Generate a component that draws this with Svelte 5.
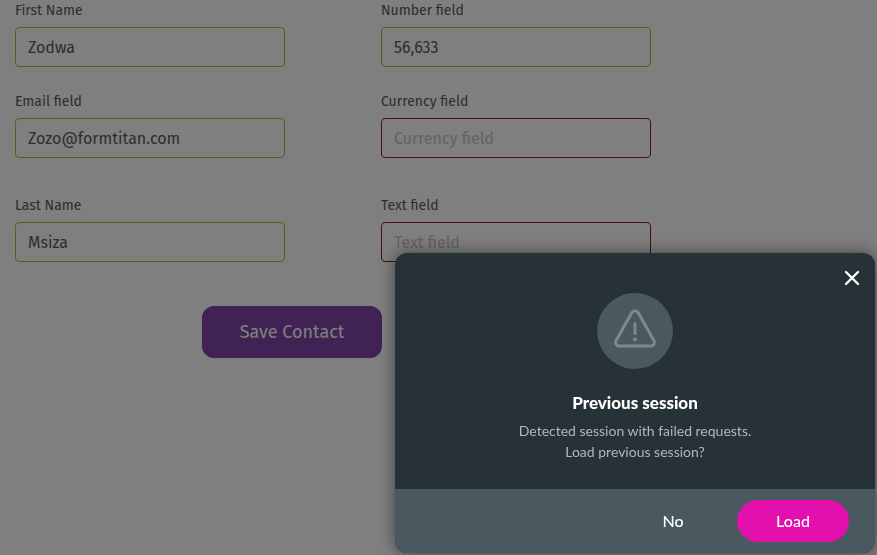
<script>
	let open = true;

	let fields = [
		{ id: 'first-name', label: 'First Name', value: 'Zodwa', valid: true },
		{ id: 'number', label: 'Number field', value: '56,633', valid: true },
		{ id: 'email', label: 'Email field', value: 'Zozo@formtitan.com', valid: true },
		{ id: 'currency', label: 'Currency field', value: '', valid: false },
		{ id: 'last-name', label: 'Last Name', value: 'Msiza', valid: true },
		{ id: 'text', label: 'Text field', value: '', valid: false }
	];

	const close = () => {
		open = false;
	};
</script>

<form class="contact-form" on:submit|preventDefault>
	<div class="fields">
		{#each fields as field (field.id)}
			<div class="field">
				<label for={field.id}>{field.label}</label>
				<input
					id={field.id}
					type="text"
					class:invalid={!field.valid}
					placeholder={field.label}
					bind:value={field.value}
				/>
			</div>
		{/each}
	</div>
	<button type="submit" class="save">Save Contact</button>
</form>

{#if open}
	<div class="backdrop"></div>
	<div class="modal" role="dialog" aria-modal="true" aria-labelledby="modal-title">
		<div class="modal-body">
			<button type="button" class="close" aria-label="Close" on:click={close}>
				<svg width="16" height="16" viewBox="0 0 16 16">
					<path d="M2 2l12 12M14 2L2 14" stroke="#fff" stroke-width="2.4" stroke-linecap="round" />
				</svg>
			</button>
			<div class="icon">
				<svg width="44" height="40" viewBox="0 0 44 40" fill="none" stroke="#7f898b" stroke-width="3">
					<path
						d="M18.9 3.4a3.6 3.6 0 0 1 6.2 0l15.8 28.2a3.6 3.6 0 0 1-3.1 5.4H6.2a3.6 3.6 0 0 1-3.1-5.4z"
						stroke-linejoin="round"
					/>
					<path d="M22 14.5v10" stroke-linecap="round" />
					<circle cx="22" cy="30.4" r="2" fill="#7f898b" stroke="none" />
				</svg>
			</div>
			<h2 id="modal-title">Previous session</h2>
			<p>Detected session with failed requests.<br />Load previous session?</p>
		</div>
		<div class="modal-footer">
			<button type="button" on:click={close}>No</button>
			<button type="button" class="primary" on:click={close}>Load</button>
		</div>
	</div>
{/if}

<style>
	:global(body) {
		background-color: #fff;
	}

	.contact-form {
		padding: 0 15px;
		font-family: 'Fira Sans', 'Noto Sans', sans-serif;
		color: #5a5a60;
	}

	.fields {
		display: grid;
		grid-template-columns: 270px 270px;
		grid-template-rows: 91px 104px 67px;
		column-gap: 96px;
	}

	.field {
		display: flex;
		flex-direction: column;
	}

	label {
		font-size: 14px;
		line-height: 22px;
		margin-bottom: 5px;
	}

	input {
		box-sizing: border-box;
		width: 100%;
		height: 40px;
		padding: 0 12px;
		border: 1px solid #b4bc2c;
		border-radius: 4px;
		background-color: #fff;
		font: inherit;
		font-size: 16px;
		color: #5a5a60;
	}

	input.invalid {
		border-color: #981820;
	}

	input::placeholder {
		color: #c4c4c4;
		opacity: 1;
	}

	.save {
		display: block;
		width: 180px;
		height: 52px;
		margin: 44px 0 0 187px;
		border: none;
		border-radius: 12px;
		background-color: #8044a8;
		color: #fff;
		font: inherit;
		font-size: 18px;
	}

	.backdrop {
		position: fixed;
		inset: 0;
		background-color: rgba(0, 0, 0, 0.5);
	}

	.modal {
		position: fixed;
		right: 2px;
		bottom: 2px;
		width: 480px;
		border-radius: 12px;
		overflow: hidden;
		box-shadow: 0 0 16px rgba(0, 0, 0, 0.5);
		background-color: #273238;
		font-family: Lato, sans-serif;
		color: #fff;
	}

	.modal-body {
		display: flex;
		flex-direction: column;
		align-items: center;
		padding: 40px 24px 27px;
		text-align: center;
	}

	.close {
		position: absolute;
		top: 13px;
		right: 11px;
		display: flex;
		padding: 4px;
		border: none;
		background: none;
		cursor: pointer;
	}

	.icon {
		display: flex;
		align-items: center;
		justify-content: center;
		width: 76px;
		height: 76px;
		padding-bottom: 4px;
		box-sizing: border-box;
		border-radius: 50%;
		background-color: #4a595f;
	}

	h2 {
		margin: 22px 0 5px;
		font-size: 17px;
		font-weight: 900;
		line-height: 24px;
	}

	p {
		margin: 0;
		font-size: 14px;
		line-height: 21px;
		color: #b4b6b8;
	}

	.modal-footer {
		display: flex;
		justify-content: flex-end;
		gap: 8px;
		padding: 11px 26px;
		background-color: #4a595f;
	}

	.modal-footer button {
		width: 112px;
		height: 42px;
		padding: 0 0 2px;
		border: none;
		border-radius: 21px;
		background: none;
		color: #fff;
		font-family: inherit;
		font-size: 16px;
		font-weight: 500;
		cursor: pointer;
	}

	.modal-footer .primary {
		background-color: #e310ae;
	}
</style>
